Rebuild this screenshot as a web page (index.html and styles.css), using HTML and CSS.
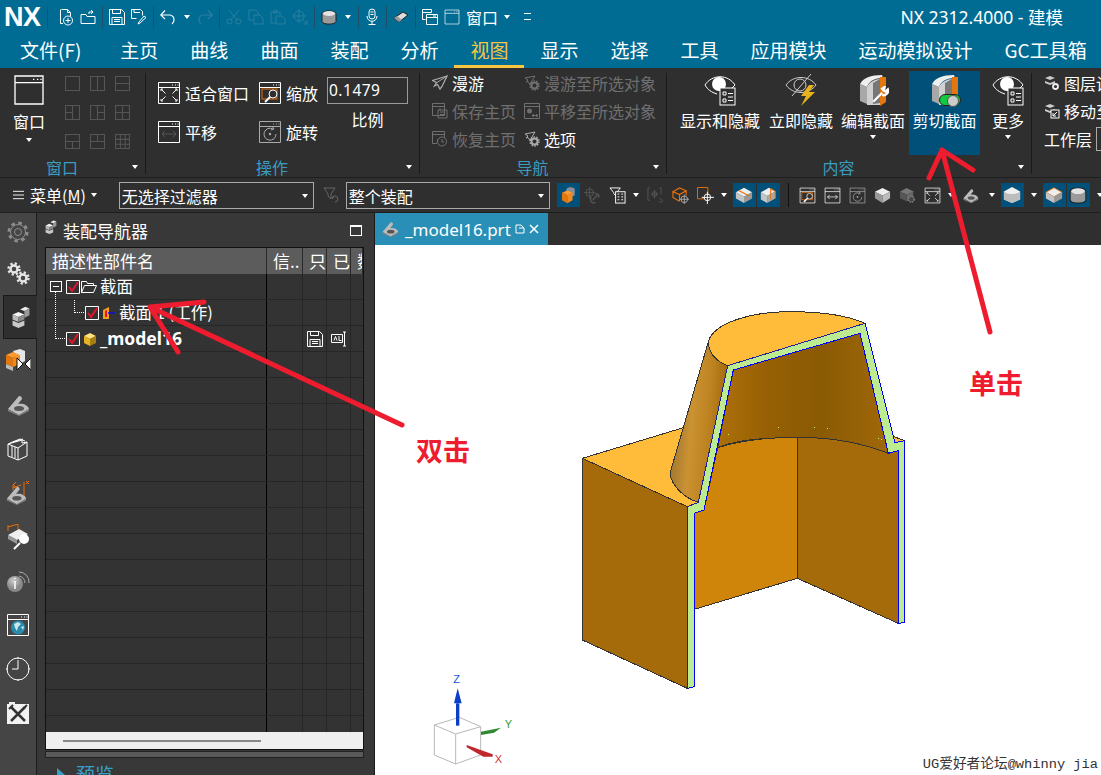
FILE: index.html
```html
<!DOCTYPE html>
<html lang="zh">
<head>
<meta charset="utf-8">
<title>NX 2312.4000 - 建模</title>
<link rel="stylesheet" href="styles.css">
</head>
<body>
<svg class="defs" aria-hidden="true">
<defs>
<symbol id="win" viewBox="0 0 24 24"><path d="M1.500 1.500h21v21h-21zM1.500 6.500h21M15 4h1M18 4h1M20.500 4h1" fill="none" stroke="currentColor"/></symbol>
<symbol id="new" viewBox="0 0 16 18"><path d="M3.500 1.500h6l3 3v4M9.500 1.500v3h3M5 15.500H2.500v-14" fill="none" stroke="currentColor"/><circle cx="10" cy="12.500" r="4.500" fill="none" stroke="currentColor"/><path d="M10 10v5M7.500 12.500h5" stroke="currentColor"/></symbol>
<symbol id="open" viewBox="0 0 16 16"><path d="M1 5.500h5l1 2h8v7H1zM9 5V3h4M11 1l2 2-2 2" fill="none" stroke="currentColor"/></symbol>
<symbol id="save" viewBox="0 0 16 16"><path d="M.5.500h12l3 3v12H.500zM3.500.500v4h8v-4M3 15.500v-7h10v7M5 10.500h6M5 12.500h6" fill="none" stroke="currentColor"/></symbol>
<symbol id="saveas" viewBox="0 0 16 16"><path d="M.5.500h9l2 2v4M.5.500v9h5M3 .5v3h6M9 14l-2 1 1-2 5-6 2 1.500z" fill="none" stroke="currentColor"/></symbol>
<symbol id="undo" viewBox="0 0 16 16"><path d="M1 6h9a5 5 0 0 1 4 5c0 2-1 3-2 4M5 1.500 .8 6 5 10" fill="none" stroke="currentColor" stroke-width="1.200"/></symbol>
<symbol id="redo" viewBox="0 0 16 16"><path d="M15 6H6a5 5 0 0 0-4 5c0 2 1 3 2 4M11 1.500 15.200 6 11 10" fill="none" stroke="currentColor" stroke-width="1.200"/></symbol>
<symbol id="cut" viewBox="0 0 16 16"><circle cx="3.500" cy="12.500" r="2.500" fill="none" stroke="currentColor"/><circle cx="12.500" cy="12.500" r="2.500" fill="none" stroke="currentColor"/><path d="M5 11 13 1M11 11 3 1" stroke="currentColor"/></symbol>
<symbol id="copy" viewBox="0 0 16 16"><path d="M1 1h7l2 2v3M1 1v10h4M6 6h6l3 3v6H6z" fill="none" stroke="currentColor"/></symbol>
<symbol id="paste" viewBox="0 0 16 16"><path d="M1 3h9v3M1 3v11h5M4 1h3v3H4zM6 7h6l3 3v5H6z" fill="none" stroke="currentColor"/></symbol>
<symbol id="move" viewBox="0 0 16 16"><circle cx="7" cy="7" r="5" fill="none" stroke="currentColor"/><path d="M7 0v14M0 7h14M10 10l5 5M15 11v4h-4" fill="none" stroke="currentColor"/></symbol>
<symbol id="cyl" viewBox="0 0 16 16"><path d="M1 4.500C2 1 14 1 15 4.500v8c-1 3.500-13 3.500-14 0z" fill="#9a9a9a" stroke="#222"/><ellipse cx="8" cy="4.500" rx="6" ry="2.600" fill="#e4e4e4"/></symbol>
<symbol id="mic" viewBox="0 0 12 18"><rect x="3" y="1" width="6" height="10" rx="3" fill="none" stroke="currentColor"/><path d="M1 8c0 7 10 7 10 0M6 13v3M2.500 16.500h7M4.500 4h3M4.500 6.500h3" fill="none" stroke="currentColor"/></symbol>
<symbol id="eraser" viewBox="0 0 16 14"><path d="M1 8 10 2l5 3-9 7z" fill="#ddd" stroke="#222"/><path d="M1 8l5 4 3-2-5-4z" fill="#999"/></symbol>
<symbol id="winstack" viewBox="0 0 16 16"><path d="M.5.500h9v3h-9zM.5 3.500v7h3M4.500 5.500h11v10h-11zM4.500 8.500h11M11 7h3" fill="none" stroke="currentColor"/></symbol>
<symbol id="fit" viewBox="0 0 24 24"><use href="#win"/><path d="M4 10v-2h2M20 10v-2h-2M4 18v2h2M20 18v2h-2M4.500 8.500l4 4M19.500 8.500l-4 4M4.500 19.500l4-4M19.500 19.500l-4-4" fill="none" stroke="currentColor"/></symbol>
<symbol id="zoom" viewBox="0 0 24 24"><use href="#win"/><rect x="4" y="8" width="15" height="10" fill="none" stroke="#e8700c"/><circle cx="15" cy="13" r="4" fill="#2f2f2f" stroke="currentColor"/><path d="M12 16l-5 5" stroke="currentColor" stroke-width="2"/></symbol>
<symbol id="pan" viewBox="0 0 24 24"><use href="#win"/><path d="M5 14h14M8 11l-3 3 3 3M16 11l3 3-3 3" fill="none" stroke="#555"/></symbol>
<symbol id="panw" viewBox="0 0 24 24"><use href="#win"/><path d="M5 14h14M8 11l-3 3 3 3M16 11l3 3-3 3" fill="none" stroke="#fff"/></symbol>
<symbol id="rot" viewBox="0 0 24 24"><path d="M1.500 1.500h21v21h-21zM1.500 6.500h21M15 4h1M18 4h1M20.500 4h1" fill="none" stroke="#aaa"/><path d="M15 9a6 6 0 1 0 3 5M14 6l2 3-3 1" fill="none" stroke="#aaa"/><circle cx="12" cy="14" r="1.200" fill="#aaa"/></symbol>
<symbol id="fly" viewBox="0 0 16 16"><path d="M15 1 .5 5.500l4 2L2.500 11l3-1.500L8 14l2-2.500z" fill="none" stroke="currentColor" stroke-width="1.300"/><path d="M15 1 5 7.500" stroke="currentColor"/></symbol>
<symbol id="flyg" viewBox="0 0 16 16"><path d="M11 1 1 3l3 2-2 2 2-.5 2 3 1-2z" fill="none" stroke="currentColor"/><circle cx="10.500" cy="10.500" r="3" fill="none" stroke="currentColor" stroke-width="2"/><circle cx="10.500" cy="10.500" r="4.500" fill="none" stroke="currentColor" stroke-dasharray="1.500 1.300" stroke-width="1.500"/></symbol>
<symbol id="shome" viewBox="0 0 16 16"><path d="M.5.500h12v12H.500zM.5 3.500h12M6 7h9v8H6zM8 5v2M8 9h5M8 11.500h5" fill="none" stroke="currentColor"/></symbol>
<symbol id="rhome" viewBox="0 0 16 16"><path d="M5 12.500H.5V.5h12v6M.5 3.500h12" fill="none" stroke="currentColor"/><circle cx="10" cy="10.500" r="4.500" fill="none" stroke="currentColor"/><path d="M6 8 5 11M10 8v3h2" fill="none" stroke="currentColor"/></symbol>
<symbol id="mvhome" viewBox="0 0 16 16"><path d="M.5.500h15v15H.500zM.5 3.500h15" fill="none" stroke="currentColor"/><circle cx="5.500" cy="8" r="2.500" fill="currentColor"/><path d="M8 12.500h6M10 11l-2 1.500 2 1.500M12 11l2 1.500-2 1.500" fill="none" stroke="currentColor"/></symbol>
<symbol id="g1" viewBox="0 0 14 14"><path d="M.5.500h13v13H.500z" fill="none" stroke="currentColor"/></symbol>
<symbol id="g2" viewBox="0 0 14 14"><path d="M.5.500h13v13H.500zM7 .5v13" fill="none" stroke="currentColor"/></symbol>
<symbol id="g3" viewBox="0 0 14 14"><path d="M.5.500h13v13H.500zM.5 7h13" fill="none" stroke="currentColor"/></symbol>
<symbol id="g4" viewBox="0 0 14 14"><path d="M.5.500h13v13H.500zM7 .5v13M.5 7H7" fill="none" stroke="currentColor"/></symbol>
<symbol id="g5" viewBox="0 0 14 14"><path d="M.5.500h13v13H.500zM7 .5v13M7 7h6.500" fill="none" stroke="currentColor"/></symbol>
<symbol id="g6" viewBox="0 0 14 14"><path d="M.5.500h13v13H.500zM7 .5v13M.5 7h13" fill="none" stroke="currentColor"/></symbol>
<symbol id="g7" viewBox="0 0 14 14"><path d="M.5.500h13v13H.500zM.5 7h13M7 7v6.500" fill="none" stroke="currentColor"/></symbol>
<symbol id="g8" viewBox="0 0 14 14"><path d="M.5.500h13v13H.500zM.5 7h13M7 .5V7" fill="none" stroke="currentColor"/></symbol>
<symbol id="g9" viewBox="0 0 14 14"><path d="M.5.500h13v13H.500zM5 .5v13M9.500 .5v13M.5 5h13M.5 9.500h13" fill="none" stroke="currentColor"/></symbol>
<symbol id="eye" viewBox="0 0 32 32"><path d="M1 11C8 0 24 0 31 11c-1 1-2 2-3 3M1 11c3 5 6 7 12 9" fill="none" stroke="#fff"/><circle cx="15" cy="10" r="7" fill="#fff"/><rect x="16" y="14" width="15" height="17" fill="#2f2f2f" stroke="#fff"/><path d="M19 18h3v3h-3zM19 25h3v3h-3zM24 19.500h5M24 23h5M24 26.500h5" fill="none" stroke="#fff"/></symbol>
<symbol id="eye2" viewBox="0 0 32 32"><path d="M1 11C8 1 24 1 31 11c-7 10-23 10-30 0z" fill="none" stroke="#ccc"/><circle cx="15" cy="11" r="6" fill="none" stroke="#ccc"/><path d="M7 22 26 0" stroke="#ccc"/><path d="M24 11l-8 11h5l-5 10 14-14h-6l5-7z" fill="#e8b21e"/></symbol>
<symbol id="sec" viewBox="0 0 32 32"><path d="M3 10 10 13V30L3 27z" fill="#a8a8a8"/><path d="M3 10C6 4 14 1 25 1l1 3C18 4 12 7 10 13z" fill="#eee"/><path d="M10 13C12 8 18 5 23 5V31H10z" fill="#d0d0d0"/><path d="M16 9 23 5V29L16 30z" fill="#777"/><path d="M23 3h6V28l-6 4z" fill="#e2760f"/></symbol>
<symbol id="gearo" viewBox="0 0 24 24"><circle cx="12" cy="12" r="9" fill="none" stroke="#8c8c8c" stroke-width="3" stroke-dasharray="3.500 3.570"/><circle cx="12" cy="12" r="7.500" fill="#454545" stroke="#8c8c8c"/><circle cx="12" cy="12" r="3.500" fill="none" stroke="#8c8c8c"/></symbol>
<symbol id="gears" viewBox="0 0 24 24"><g fill="none" stroke="#e6e6e6"><circle cx="8" cy="8" r="5.500" stroke-width="2.400" stroke-dasharray="2.200 2.120"/><circle cx="8" cy="8" r="3.500" stroke-width="2.400"/><circle cx="17" cy="17" r="5.500" stroke-width="2.400" stroke-dasharray="2.200 2.120"/><circle cx="17" cy="17" r="3.500" stroke-width="2.400"/></g></symbol>
<symbol id="cubes" viewBox="0 0 22 26"><path d="M1 10l7-3 7 3-7 3z" fill="#f4f4f4"/><path d="M1 10v6l7 3v-6z" fill="#bbb"/><path d="M8 13v6l7-3v-6z" fill="#8a8a8a"/><path d="M1 17l7 3 7-3v6l-7 3-7-3z" fill="#c8c8c8"/><path d="M10 4l6-3 5 2-6 3z" fill="#eee"/><path d="M15 6v8l6-3V3z" fill="#999"/></symbol>
<symbol id="rasm" viewBox="0 0 26 26"><path d="M8 3l7-2 5 2v10l-5 3z" fill="#e6e6e6"/><path d="M1 7l7-3 7 3-7 3z" fill="#ff9a2e"/><path d="M1 7v9l7 3v-9z" fill="#e2760f"/><path d="M8 10v9l7-3V7z" fill="#f08a1e"/><path d="M1 16l7 3v4l-7-3z" fill="#bbb"/><path d="M12 10l6 6-6 6zM26 10l-6 6 6 6z" fill="#fff" stroke="#111"/></symbol>
<symbol id="seat" viewBox="0 0 24 24"><path d="M2 16 13 3c2 0 3 1 3 3l-4 5c5-1 10 1 11 5l-10 6z" fill="#bcbcbc"/><path d="M2 16l11 6 10-6v2l-10 5-11-5z" fill="#808080"/><ellipse cx="13" cy="15.500" rx="5" ry="2.500" fill="#555"/></symbol>
<symbol id="book" viewBox="0 0 24 24"><path d="M2 7 16 3v3l5-1v14l-9 4-10-4zM2 7l10 4v12M12 11l9-6M4 6l10-4 5 2M7 5l10-3" fill="none" stroke="#fff"/><path d="M6 9v11M9 10v11" stroke="#fff"/></symbol>
<symbol id="seatdim" viewBox="0 0 26 26"><use href="#seat" width="22" height="22" y="4"/><path d="M8 8l8-3M19 2v14M8 5v5M11 2l-3 3 3 2M21 1l3 3M24 1l-3 3" fill="none" stroke="#e8700c"/></symbol>
<symbol id="boxmag" viewBox="0 0 26 26"><path d="M3 11l11-6 9 5-11 6z" fill="#eee"/><path d="M3 11v4l9 5v-4z" fill="#999"/><path d="M3 3l10-3M3 1v6M13 0v5" fill="none" stroke="#e8700c"/><circle cx="19" cy="15" r="5" fill="#fff"/><path d="M15 19l-6 6" stroke="#fff" stroke-width="2"/></symbol>
<symbol id="tb1" viewBox="0 0 20 24"><path d="M8 4c2-3 9-3 11 0v8c-2 3-9 3-11 0z" fill="#8a8f95"/><path d="M2 9l7-3 7 3-7 3z" fill="#ff9a2e"/><path d="M2 9v10l7 4V12z" fill="#e2760f"/><path d="M9 12v11l7-4V9z" fill="#f08a1e"/></symbol>
<symbol id="tb2" viewBox="0 0 18 18"><circle cx="6" cy="6" r="4" fill="none" stroke="#555"/><path d="M6 0v12M0 6h12" stroke="#555"/><path d="M9 14l5-5M8 11a3 3 0 1 0 4 5M15 11a2 2 0 0 0-3-3" fill="none" stroke="#555" stroke-width="1.500"/></symbol>
<symbol id="tb3" viewBox="0 0 18 18"><path d="M1 1h11L8 6v4L5 7V6z" fill="none" stroke="#fff"/><rect x="7" y="5" width="10" height="12" fill="#2f2f2f" stroke="#fff"/><path d="M9 7.500h2M9 10.500h2M9 13.500h2M13 7.500h2M13 10.500h2M13 13.500h2" stroke="#fff"/></symbol>
<symbol id="tb4" viewBox="0 0 18 18"><path d="M3 1H1v13h2M13 1h2v7M8 3v9M4 7.500h8" fill="none" stroke="#555"/><circle cx="8" cy="7.500" r="2.500" fill="none" stroke="#555"/><path d="M13 12a3 3 0 0 1 3 4h-3" fill="none" stroke="#555"/></symbol>
<symbol id="tb5" viewBox="0 0 18 18"><path d="M1 5l7-4 7 3-7 4zM1 5v6l7 4M8 8v7M15 4v5" fill="none" stroke="#e8700c" stroke-width="1.200"/><circle cx="13" cy="13" r="3.500" fill="#2f2f2f" stroke="#aaa"/><path d="M13 8v10M8 13h10" stroke="#aaa"/></symbol>
<symbol id="tb6" viewBox="0 0 18 18"><path d="M.5.500h11v12H.500z" fill="none" stroke="#e8700c"/><circle cx="11" cy="11" r="3.500" fill="#2f2f2f" stroke="#fff"/><path d="M11 5v13M5 11h13" stroke="#fff"/></symbol>
<symbol id="box1" viewBox="0 0 20 20"><path d="M1 7l9-5 9 5-9 5z" fill="#eee"/><path d="M1 7v7l9 5v-7z" fill="#c4c4c4"/><path d="M10 12v7l9-5V7z" fill="#999"/><path d="M4 5l12 6" stroke="#e8700c" stroke-width="1.300"/></symbol>
<symbol id="box2" viewBox="0 0 20 20"><path d="M2 7l9-5 7 4-9 5z" fill="#eee"/><path d="M2 7v8l7 4v-8z" fill="#c4c4c4"/><path d="M9 11v8l9-5V6z" fill="#aaa"/><path d="M13 3v12M13 3l5 3v8" fill="none" stroke="#e8700c" stroke-width="1.200"/></symbol>
<symbol id="box3" viewBox="0 0 20 20"><path d="M1 7l9-5 9 5-9 5z" fill="#eee" stroke="#e8700c"/><path d="M1 7v7l9 5v-7z" fill="#c4c4c4"/><path d="M10 12v7l9-5V7z" fill="#999"/></symbol>
<symbol id="box4" viewBox="0 0 20 20"><path d="M1 6l9-5 9 5v9l-9 4-9-4z" fill="#f0f0f0"/><path d="M1 6c4 4 14 4 18 0v9l-9 4-9-4z" fill="#bdbdbd"/></symbol>
<symbol id="gbox" viewBox="0 0 18 18"><path d="M1 5l7-4 8 4-8 3z" fill="#777"/><path d="M1 5v7l7 3V8z" fill="#555"/><path d="M8 8v7l7-3V5z" fill="#666"/><circle cx="13" cy="13" r="3" fill="#444" stroke="#888" stroke-width="1.500" stroke-dasharray="1.500 1"/></symbol>
<symbol id="wbox" viewBox="0 0 18 18"><path d="M1 5l8-4 8 4-8 4z" fill="#eee"/><path d="M1 5v7l8 5V9z" fill="#999"/><path d="M9 9v8l8-5V5z" fill="#bbb"/></symbol>
<symbol id="lay1" viewBox="0 0 16 16"><path d="M1 3l5-2 5 2-5 2zM1 6l5 2 5-2v2l-5 2-5-2z" fill="#ccc"/><circle cx="11.500" cy="11.500" r="2.500" fill="none" stroke="#eee" stroke-width="1.800"/></symbol>
<symbol id="lay2" viewBox="0 0 16 16"><path d="M1 3l5-2 5 2-5 2zM1 6l5 2 5-2v2l-5 2-5-2z" fill="#ccc"/><rect x="7" y="7" width="8" height="8" fill="#2f2f2f" stroke="#fff"/><path d="M13 9 9 13M9 10v3h3" fill="none" stroke="#fff"/></symbol>
<symbol id="check" viewBox="0 0 14 14"><path d="M.5.500h13v13H.500z" fill="none" stroke="#fff"/><path d="M3 7l3 4 6-9" fill="none" stroke="#e5132c" stroke-width="2"/></symbol>
</defs>
</svg>

<div class="app">
  <header class="titlebar">
    <div class="nx">NX</div>
    <i class="qs qs0"></i>
    <svg class="q"><use href="#new"/></svg><svg class="q"><use href="#open"/></svg>
    <i class="qs"></i>
    <svg class="q"><use href="#save"/></svg><svg class="q"><use href="#saveas"/></svg>
    <i class="qs"></i>
    <svg class="q"><use href="#undo"/></svg><i class="car"></i><svg class="q off"><use href="#redo"/></svg>
    <i class="qs"></i>
    <svg class="q off"><use href="#cut"/></svg><svg class="q off"><use href="#copy"/></svg><svg class="q off"><use href="#paste"/></svg><svg class="q off"><use href="#move"/></svg>
    <i class="qs"></i>
    <svg class="q"><use href="#cyl"/></svg><i class="car"></i>
    <i class="qs"></i>
    <svg class="q qm"><use href="#mic"/></svg>
    <i class="qs"></i>
    <svg class="q"><use href="#eraser"/></svg>
    <i class="qs"></i>
    <svg class="q"><use href="#winstack"/></svg><svg class="q"><use href="#win"/></svg>
    <span class="qt">窗口</span><i class="car"></i><span class="qd"></span>
    <div class="apptitle">NX 2312.4000 - 建模</div>
  </header>

  <nav class="tabs">
    <a class="tab first">文件(F)</a><a class="tab">主页</a><a class="tab">曲线</a><a class="tab">曲面</a><a class="tab">装配</a><a class="tab">分析</a><a class="tab on">视图</a><a class="tab">显示</a><a class="tab">选择</a><a class="tab">工具</a><a class="tab">应用模块</a><a class="tab">运动模拟设计</a><a class="tab">GC工具箱</a>
  </nav>

  <section class="ribbon">
    <div class="group g-win">
      <div class="gbody">
        <div class="bigwin">
          <svg class="bigwin-i"><use href="#win"/></svg>
          <span>窗口</span><i class="car"></i>
        </div>
        <div class="wgrid">
          <svg><use href="#g1"/></svg><svg><use href="#g2"/></svg><svg><use href="#g3"/></svg>
          <svg><use href="#g4"/></svg><svg><use href="#g5"/></svg><svg><use href="#g6"/></svg>
          <svg><use href="#g7"/></svg><svg><use href="#g8"/></svg><svg><use href="#g9"/></svg>
        </div>
      </div>
      <div class="glabel"><span>窗口</span><i class="car"></i></div>
    </div>

    <div class="group g-op">
      <div class="gbody">
        <div class="opgrid">
          <div class="opitem"><svg class="i24"><use href="#fit"/></svg>适合窗口</div>
          <div class="opitem"><svg class="i24"><use href="#zoom"/></svg>缩放</div>
          <div class="scale"><div class="scale-in">0.1479</div></div>
          <div class="opitem"><svg class="i24"><use href="#pan"/></svg>平移</div>
          <div class="opitem"><svg class="i24"><use href="#rot"/></svg>旋转</div>
          <div class="scale-l">比例</div>
        </div>
      </div>
      <div class="glabel"><span>操作</span><i class="car"></i></div>
    </div>

    <div class="group g-nav">
      <div class="gbody">
        <div class="navgrid">
          <div class="nv lit"><svg class="i16"><use href="#fly"/></svg><span>漫游</span></div>
          <div class="nv dim"><svg class="i16"><use href="#flyg"/></svg>漫游至所选对象</div>
          <div class="nv dim"><svg class="i16"><use href="#shome"/></svg>保存主页</div>
          <div class="nv dim"><svg class="i16"><use href="#mvhome"/></svg>平移至所选对象</div>
          <div class="nv dim"><svg class="i16"><use href="#rhome"/></svg>恢复主页</div>
          <div class="nv lit"><svg class="i16"><use href="#flyg"/></svg><span>选项</span></div>
        </div>
      </div>
      <div class="glabel"><span>导航</span><i class="car"></i></div>
    </div>

    <div class="group g-con">
      <div class="gbody conrow">
        <div class="bb b81"><svg class="i32"><use href="#eye"/></svg><span>显示和隐藏</span></div>
        <div class="bb b64"><svg class="i32"><use href="#eye2"/></svg><span>立即隐藏</span></div>
        <div class="bb b64"><span class="ico"><svg class="i32"><use href="#sec"/></svg><svg class="wrench" viewBox="0 0 16 16"><path d="M2 14 10 6M9 3l3-2-1 3 2 1 2-2c1 3-2 6-5 5" fill="none" stroke="#fff" stroke-width="2"/></svg></span><span>编辑截面</span><i class="car"></i></div>
        <div class="bb b71 sel"><span class="ico"><svg class="i32"><use href="#sec"/></svg><span class="toggle"></span></span><span>剪切截面</span></div>
        <div class="bb b32"><svg class="i32"><use href="#eye"/></svg><span>更多</span><i class="car"></i></div>
      </div>
      <div class="glabel"><span>内容</span><i class="car"></i></div>
    </div>

    <div class="group g-lay">
      <div class="layrow"><svg class="i16"><use href="#lay1"/></svg>图层设置</div>
      <div class="layrow"><svg class="i16"><use href="#lay2"/></svg>移动至图层</div>
      <div class="layrow">工作层<span class="layin"></span></div>
    </div>
  </section>

  <section class="toolbar">
    <svg class="menuic" viewBox="0 0 12 10"><path d="M0 1h12M0 5h12M0 9h12" stroke="#fff"/></svg>
    <span class="menu">菜单(<u>M</u>)</span><i class="car"></i>
    <div class="sel-box s1">无选择过滤器<i class="car"></i></div>
    <svg class="fun" viewBox="0 0 16 16"><path d="M1 1h11L8 7v5L5 9V7zM9 11a3 3 0 1 1 3 4M10 12l-1-1 2-1" fill="none" stroke="#666"/></svg>
    <div class="sel-box s2">整个装配<i class="car"></i></div>
    <div class="tbicons">
      <b class="hl"><svg class="i18"><use href="#tb1"/></svg></b>
      <svg class="ti n4"><use href="#tb2"/></svg>
      <svg class="ti"><use href="#tb3"/></svg><i class="car"></i>
      <svg class="ti"><use href="#tb4"/></svg>
      <svg class="ti"><use href="#tb5"/></svg>
      <svg class="ti"><use href="#tb6"/></svg><i class="car"></i>
      <b class="hl"><svg class="i18"><use href="#box1"/></svg></b>
      <b class="hl"><svg class="i18"><use href="#box2"/></svg></b>
      <i class="tbs"></i>
      <svg class="ti"><use href="#zoom"/></svg>
      <svg class="ti"><use href="#panw"/></svg>
      <svg class="ti"><use href="#rot"/></svg>
      <svg class="ti"><use href="#wbox"/></svg>
      <svg class="ti"><use href="#gbox"/></svg>
      <svg class="ti"><use href="#fit"/></svg><i class="car"></i>
      <svg class="ti"><use href="#seat"/></svg><i class="car far"></i>
      <b class="hl"><svg class="i18"><use href="#box4"/></svg></b><i class="car"></i>
      <b class="hl"><svg class="i18"><use href="#box3"/></svg></b>
      <b class="hl"><svg class="i18"><use href="#cyl"/></svg></b><i class="car"></i>
    </div>
  </section>

  <main class="main">
    <aside class="rail">
      <div class="rl rl0"><svg class="i24"><use href="#gearo"/></svg></div>
      <div class="rl"><svg class="i24"><use href="#gears"/></svg></div>
      <div class="rl rl-on"><svg class="i22"><use href="#cubes"/></svg></div>
      <div class="rl"><svg class="i26"><use href="#rasm"/></svg></div>
      <div class="rl"><svg class="i24"><use href="#seat"/></svg></div>
      <div class="rl"><svg class="i24"><use href="#book"/></svg></div>
      <div class="rl"><svg class="i26"><use href="#seatdim"/></svg></div>
      <div class="rl"><svg class="i26"><use href="#boxmag"/></svg></div>
      <div class="rl"><svg class="i24" viewBox="0 0 24 24"><defs><radialGradient id="ib" cx=".4" cy=".3"><stop offset="0" stop-color="#ccc"/><stop offset="1" stop-color="#888"/></radialGradient></defs><path d="M13 3a10 10 0 0 1 10 11M13 7a7 7 0 0 1 6 7" fill="none" stroke="#aaa"/><circle cx="9" cy="15" r="8" fill="url(#ib)"/><path d="M9 12v8M9 9v1" stroke="#fff" stroke-width="1.500"/></svg></div>
      <div class="rl"><svg class="i24" viewBox="0 0 24 24"><use href="#win"/><circle cx="12" cy="14.500" r="7" fill="#2a8aac"/><path d="M8 11l4-2 3 2-3 3-1 4-2-3zM15 14l3-1-1 4z" fill="#cfe6ee"/></svg></div>
      <div class="rl"><svg class="i24" viewBox="0 0 24 24"><circle cx="12" cy="12" r="11" fill="none" stroke="#fff"/><path d="M12 3v9H6M12 0v2M12 22v2M0 12h2M22 12h2" fill="none" stroke="#fff"/></svg></div>
      <div class="rl"><svg class="i24" viewBox="0 0 24 24"><path d="M1 3h22v20H1zM3 1h6v3H3z" fill="#f2f2f2"/><path d="M5 6l14 14M19 6 5 20" stroke="#333" stroke-width="2.500"/><path d="M3 8l4-4M21 4l-4 4" stroke="#333" stroke-width="2"/></svg></div>
    </aside>

    <section class="panel">
      <div class="ptitle"><svg class="i14"><use href="#cubes"/></svg><span>装配导航器</span><i class="pmax"></i></div>
      <div class="table">
        <div class="thead"><span>描述性部件名</span><span>信..</span><span>只</span><span>已</span><span>数</span></div>
        <div class="tbody">
          <div class="row"><div class="c1 l0"><i class="box"></i><svg class="i14"><use href="#check"/></svg><svg class="fold" viewBox="0 0 16 12"><path d="M.5 11.500v-11h5l1 2h6v2M.5 11.500l3-7h12l-3 7z" fill="none" stroke="#fff"/></svg><span class="nm">截面</span></div><div></div><div></div><div></div><div></div></div>
          <div class="row"><div class="c1 l1"><i class="dt1"></i><svg class="i14"><use href="#check"/></svg><svg class="prt" viewBox="0 0 14 14"><path d="M1 4l6-3v12H1z" fill="#f3a21c"/><path d="M3 5l2-1v7H3z" fill="#e5132c"/><path d="M6 7h7" stroke="#0b12d8" stroke-width="1.500"/></svg><span class="nm">截面 1 (工作)</span></div><div></div><div></div><div></div><div></div></div>
          <div class="row"><div class="c1 l0b"><i class="dt2"></i><svg class="i14"><use href="#check"/></svg><svg class="prt" viewBox="0 0 14 14"><path d="M1 4l6-3 6 3-6 3z" fill="#ffe27a"/><path d="M1 4v7l6 3V7z" fill="#e8b21e"/><path d="M7 7v7l6-3V4z" fill="#a77f10"/></svg><span class="nm bold">_model16</span></div><div></div><div class="ci"><svg class="i16"><use href="#save"/></svg></div><div class="ci"><svg class="i16" viewBox="0 0 16 16"><path d="M.5 3.500h11v8H.500zM13.500 1v14M12 1h3M12 15h3M3 9.500l1.500-4 1.500 4M8 5v4.500h2.500" fill="none" stroke="#fff"/></svg></div><div></div></div>
          <div class="row"></div><div class="row"></div><div class="row"></div><div class="row"></div><div class="row"></div><div class="row"></div><div class="row"></div><div class="row"></div><div class="row"></div><div class="row"></div><div class="row"></div><div class="row"></div><div class="row"></div><div class="row"></div><div class="row"></div>
        </div>
        <div class="hscroll"><i></i></div>
      </div>
      <div class="pbar"></div>
      <div class="preview"><i class="tri"></i><span>预览</span></div>
    </section>

    <section class="view">
      <div class="vtabs"><div class="vtab"><svg class="i18"><use href="#seat"/></svg><span>_model16.prt</span><svg class="i10" viewBox="0 0 10 10"><path d="M1 1h5l3 3v5H1zM4 4h5" fill="none" stroke="#fff"/></svg><svg class="i10" viewBox="0 0 10 10"><path d="M1 1l8 8M9 1 1 9" stroke="#fff" stroke-width="1.500"/></svg></div></div>
      <div class="canvas">
        <svg class="model" viewBox="0 0 1050 1200">
          <defs>
            <linearGradient id="cone" x1="0" y1="0" x2="1" y2="0.200"><stop offset="0" stop-color="#8d6a32"/><stop offset=".45" stop-color="#cb9232"/><stop offset=".75" stop-color="#bd8220"/><stop offset="1" stop-color="#a06a0c"/></linearGradient>
            <linearGradient id="wall" x1="0" y1="0" x2="1" y2="0"><stop offset="0" stop-color="#ad7009"/><stop offset=".3" stop-color="#965f03"/><stop offset=".6" stop-color="#8a5a04"/><stop offset="1" stop-color="#a06808"/></linearGradient>
          </defs>
          <g stroke="#333" stroke-width="3" stroke-linejoin="round">
            <path d="M37 475 340 383 300 520 385 607 352 620z" fill="#ffbc3b"/>
            <path d="M965 407 1003 422 975 428z" fill="#ffbc3b"/>
            <path d="M37 475 352 620V1165L37 1020z" fill="#a56b0a"/>
            <path d="M415 125 300 520C305 560 345 595 385 607L473 197C440 185 415 160 415 125z" fill="url(#cone)"/>
            <path d="M473 197C440 185 415 160 415 125 430 70 540 35 660 35 760 35 840 50 885 70z" fill="#ffbc3b"/>
            <path d="M490 210 870 100 955 460C860 420 570 390 443 443z" fill="url(#wall)"/>
            <path d="M373 640 402 630 443 443C500 425 590 412 682 412V835L373 928z" fill="#ce8509"/>
            <path d="M682 412C780 412 880 430 955 460L985 452V970L682 835z" fill="#a56b0a"/>
          </g>
          <path d="M352 620V1165L373 1160V640L402 630 490 210 870 100 955 460 985 452V970L1003 968V422L975 428 885 70 473 197 385 607z" fill="#bdeb90" stroke="#0000ff" stroke-width="3"/>
          <path d="M352 620V1165M885 70 473 197 385 607 352 620" fill="none" stroke="#1f1fa0" stroke-width="3"/>
          <path d="M625 382h3v3h-3zM732 381h3v3h-3zM771 384h3v3h-3zM474 402h3v3h-3zM924 414h3v3h-3zM934 417h3v3h-3z" fill="#c8f070"/>
        </svg>
        <svg class="gizmo" viewBox="0 0 360 345">
          <path d="M43 195 107 222 182 200 118 172zM43 195V285L107 312V222M107 312 182 285V200" fill="#fff" stroke="#b8b8b8" stroke-width="3"/>
          <path d="M108 130h10v67h-10z" fill="#0b3fc8"/><path d="M113 85 125 130H102z" fill="#0b3fc8"/>
          <path d="M183 215 243 203 222 218 183 225z" fill="#2f8a2f"/>
          <path d="M140 255 218 283V290H190L140 262z" fill="#c0272d"/>
          <text class="gz gz-z" x="100" y="70">Z</text><text class="gz gz-y" x="254" y="204">Y</text><text class="gz gz-x" x="224" y="310">X</text>
        </svg>
        <div class="wm">UG爱好者论坛@whinny jia</div>
      </div>
    </section>
  </main>

  <svg class="marks" viewBox="0 0 1101 775">
    <path d="M402 425 150 307M150 307 204 302M150 307 178 352M990 332 942 150M942 150 929 178M942 150 973 170" fill="none" stroke="#ed1c2e" stroke-width="5" stroke-linecap="round"/>
  </svg>
  <div class="note n1">双击</div>
  <div class="note n2">单击</div>
</div>
</body>
</html>
```

FILE: styles.css
```css
*{box-sizing:border-box}
html,body{margin:0;padding:0;background:#2f2f2f}
body{font-family:"Noto Sans CJK SC","Noto Sans",sans-serif;color:#fff;overflow:hidden}
i{font-style:normal;display:block;flex:none}
svg{display:block;flex:none}
.defs{width:0;height:0;position:absolute}
.app{position:relative;width:1101px;height:775px;display:flex;flex-direction:column;overflow:hidden}

.i10{width:10px;height:10px}
.i14{width:14px;height:14px}
.i16{width:16px;height:16px}
.i18{width:18px;height:18px}
.i22{width:22px;height:22px}
.i24{width:24px;height:24px}
.i26{width:26px;height:26px}
.i32{width:32px;height:32px}
.car{width:0;height:0;border-left:3.500px solid transparent;border-right:3.500px solid transparent;border-top:4px solid #fff}

.titlebar{height:34px;background:#006c94;display:flex;align-items:center;padding:0 0 1px 4px;color:#fff}
.nx{font:700 27px/34px "Liberation Sans",sans-serif;letter-spacing:-.5px;width:42px;flex:none}
.qs{width:1px;height:22px;background:#1c4f68;margin:0 6px 0 0}
.qs0{margin:0 10px 0 1px}
.q{width:16px;height:18px;margin-right:6px}
.qm{width:12px;margin:0 8px 0 1px}
.off{color:#2b7e9e}
.titlebar .car{margin:0 7px 0 2px}
.qt{font-size:16px;margin-right:4px}
.qd{width:7px;height:7px;border-top:1px solid #fff;border-bottom:1px solid #fff;margin-left:7px}
.apptitle{margin-left:auto;margin-right:38px;font:17.500px/34px "Noto Sans","Noto Sans CJK SC",sans-serif}

.tabs{height:34px;background:#006c94;display:flex;padding-left:4px}
.tab{display:block;padding:0 16px;font-size:19px;line-height:32px;height:34px;color:#fff;white-space:nowrap}
.tab.first{padding-right:23px}
.tab.on{color:#f8c640;border-bottom:3px solid #f8c640}

.ribbon{height:110px;background:#2f2f2f;display:flex;border-bottom:1px solid #1e1e1e}
.group{display:flex;flex-direction:column;position:relative;flex:none}
.group::after{content:"";position:absolute;right:0;top:5px;bottom:3px;width:1px;background:#1a1a1a}
.gbody{height:88px;display:flex}
.glabel{flex:1;display:flex;align-items:center;padding-right:22px;position:relative;font-size:16px;color:#3a9cc0}
.glabel span{flex:1;text-align:center;line-height:20px}
.glabel .car{position:absolute;right:8px;top:9px}
.g-win{width:146px}
.g-op{width:274px}
.g-nav{width:247px}
.g-con{width:365px}
.g-lay{flex:1}
.g-lay::after{display:none}

.bigwin{width:58px;display:flex;flex-direction:column;align-items:center;padding-top:6px;font-size:16px;line-height:22px}
.bigwin-i{width:32px;height:32px;margin-bottom:4px}
.bigwin .car{margin-top:6px}
.wgrid{margin:8px 0 0 7px;display:grid;grid-template-columns:repeat(3,15px);grid-auto-rows:15px;column-gap:10px;row-gap:14px;color:#555}
.wgrid svg{width:15px;height:15px}

.opgrid{display:grid;grid-template-columns:101px 69px 81px;grid-template-rows:39px 39px;margin:5px 0 0 11px}
.opitem{display:flex;align-items:center;gap:4px;font-size:16px;white-space:nowrap}
.scale{padding-top:4px}
.scale-in{width:81px;height:27px;border:1px solid #9a9a9a;font:15.500px/25px "Noto Sans",sans-serif;padding-left:1px;letter-spacing:.5px}
.scale-l{font-size:16px;text-align:center;line-height:14px}

.navgrid{display:grid;grid-template-columns:92px 150px;grid-auto-rows:28px;margin:1px 0 0 12px;font-size:16px;color:#aaa}
.nv{display:flex;align-items:center;gap:4px;white-space:nowrap}
.nv span{color:#fff}
.dim{color:#6f6f6f}

.conrow{padding:3px 0 0 8px;gap:0}
.bb{display:flex;flex-direction:column;align-items:center;font-size:16px;line-height:24px;white-space:nowrap;padding-top:3px;height:84px;flex:none}
.bb .i32{margin-bottom:2px}
.bb .car{margin-top:3px}
.b81{width:90px}
.b64{width:72px}
.b71{width:71px}
.b32{width:56px}
.sel{background:#00507a}
.ico{position:relative;display:block;width:32px;height:34px}
.wrench{position:absolute;right:0;bottom:4px;width:18px;height:18px}
.toggle{position:absolute;right:0;bottom:2px;width:22px;height:12px;border-radius:6px;background:#13c93d;border:1px solid #222}
.toggle::after{content:"";position:absolute;right:1px;top:0;width:10px;height:10px;border-radius:50%;background:#ccc;border:1px solid #555}

.g-lay{padding:1px 0 0 12px;font-size:16px}
.layrow{display:flex;align-items:center;gap:4px;height:28px;white-space:nowrap}
.layin{width:20px;height:24px;border:1px solid #aaa;margin-left:0}

.toolbar{height:35px;background:#2f2f2f;display:flex;align-items:center;padding-left:13px;border-bottom:1px solid #1e1e1e;font-size:16px;overflow:hidden}
.toolbar > *{flex:none}
.menuic{width:11px;height:10px;margin-right:6px}
.menu{margin-right:5px;white-space:nowrap}
.sel-box{height:27px;border:1px solid #aaa;display:flex;align-items:center;justify-content:space-between;padding:1px 5px 0 2px;font-size:16px}
.s1{width:195px;margin-left:22px}
.s2{width:204px;margin-left:7px}
.fun{width:16px;height:16px;margin-left:9px}
.tbicons{display:flex;align-items:center;margin-left:7px}
.ti{width:17px;height:17px;margin-left:8px;flex:none}
.n4{margin-left:4px}
.tbicons .car{margin-left:7px}
.tbicons .far{margin-left:10px}
.hl{display:flex;width:23px;height:24px;background:#00507a;align-items:center;justify-content:center;flex:none}
.hl + .hl{margin-left:1px}
.car + .hl{margin-left:6px}
.tbs{width:1px;height:24px;background:#111;margin:0 2px 0 8px}

.main{flex:1;display:flex;min-height:0}
.rail{width:37px;background:#454545;border-right:1px solid #1e1e1e;flex:none;display:flex;flex-direction:column}
.rl{height:44px;display:flex;align-items:center;justify-content:center;flex:none;color:#fff}
.rl0{height:38px}
.rl-on{background:#2f2f2f;margin-left:3px;margin-right:-1px;border:1px solid #1a1a1a;border-right:0;position:relative}

.panel{width:338px;background:#383838;flex:none;display:flex;flex-direction:column;padding:0 10px 0 8px;border-right:1px solid #1a1a1a;height:562px}
.ptitle{height:34px;display:flex;align-items:center;font-size:17px;gap:5px;flex:none}
.ptitle span{flex:1}
.ptitle svg{margin-left:-1px;margin-top:-6px}
.pmax{width:12px;height:11px;border:1px solid #fff;border-top-width:2px;margin-right:2px}
.table{height:503px;border:1px solid #111;display:flex;flex-direction:column;background:#333;flex:none}
.thead{height:26px;display:grid;grid-template-columns:221px 36px 24px 24px 1fr;background:#5c5c5c;font-size:17px;line-height:26px;overflow:hidden;flex:none}
.thead span{padding-left:6px;border-right:1px solid #2a2a2a;white-space:nowrap;overflow:hidden}
.tbody{flex:1;overflow:hidden;min-height:0}
.row{height:26px;border-bottom:1px solid #262626;display:grid;grid-template-columns:221px 36px 24px 24px 1fr;background:linear-gradient(90deg,transparent 220px,#000 220px,#000 221px,transparent 221px,transparent 256px,#262626 256px,#262626 257px,transparent 257px,transparent 280px,#262626 280px,#262626 281px,transparent 281px,transparent 304px,#262626 304px,#262626 305px,transparent 305px)}
.c1{display:flex;align-items:center;position:relative;font-size:16.500px;white-space:nowrap;overflow:hidden}
.l0{padding-left:4px}
.l1{padding-left:39px}
.l0b{padding-left:20px}
.box{width:12px;height:11px;border:1px solid #fff;position:relative;margin-right:4px}
.box::after{content:"";position:absolute;left:2px;right:2px;top:4px;height:1px;background:#fff}
.fold{width:16px;height:12px;margin:0 3px 0 1px}
.prt{width:14px;height:14px;margin:0 3px}
.nm{display:block;line-height:25px}
.bold{font-weight:700;font-family:"Noto Sans","Noto Sans CJK SC",sans-serif;font-size:17.500px}
.dt1{position:absolute;left:28px;top:0;width:10px;height:13px;border-left:1px dotted #fff;border-bottom:1px dotted #fff}
.dt2{position:absolute;left:9px;top:-35px;width:10px;height:48px;border-left:1px dotted #fff;border-bottom:1px dotted #fff}
.row .c1.l0b{overflow:visible}
.ci{display:flex;align-items:center;justify-content:center}
.hscroll{height:17px;background:#efefef;flex:none;padding:8px 0 0 17px}
.hscroll i{width:198px;height:2px;background:#888}
.pbar{height:7px;background:#5a5a5a;border:1px solid #222;margin-top:1px;flex:none}
.preview{display:flex;align-items:flex-start;padding:5px 0 0 12px;color:#36a0c8;font-size:19px;line-height:22px;gap:11px}
.tri{width:0;height:0;border-left:8px solid #36a0c8;border-top:7px solid transparent;border-bottom:7px solid transparent;margin-top:5px}

.view{flex:1;min-width:0;display:flex;flex-direction:column}
.vtabs{height:32px;background:#2f2f2f;flex:none}
.vtab{width:173px;height:32px;background:#2a8fb6;display:flex;align-items:center;font-size:17px;padding-left:6px;gap:4px}
.vtab span{margin-left:2px;font-family:"Noto Sans",sans-serif;font-size:17px}
.canvas{flex:1;background:#fff;position:relative;overflow:hidden}
.model{position:absolute;left:195px;top:55px;width:350px;height:400px;shape-rendering:crispEdges}
.gizmo{position:absolute;left:45px;top:415px;width:120px;height:115px}
.gz{font:33px "Liberation Sans",sans-serif}
.gz-z{fill:#1257d8}
.gz-y{fill:#2f9a3a}
.gz-x{fill:#d23038}
.wm{position:absolute;right:3px;bottom:1px;font:13.700px/18px "Liberation Mono","Noto Sans CJK SC",monospace;color:#333;white-space:nowrap}

.marks{position:absolute;left:0;top:0;width:1101px;height:775px;pointer-events:none}
.note{position:absolute;font-size:27px;line-height:34px;font-weight:700;color:#ed1c2e}
.n1{left:416px;top:433px}
.n2{left:969px;top:366px}
```
